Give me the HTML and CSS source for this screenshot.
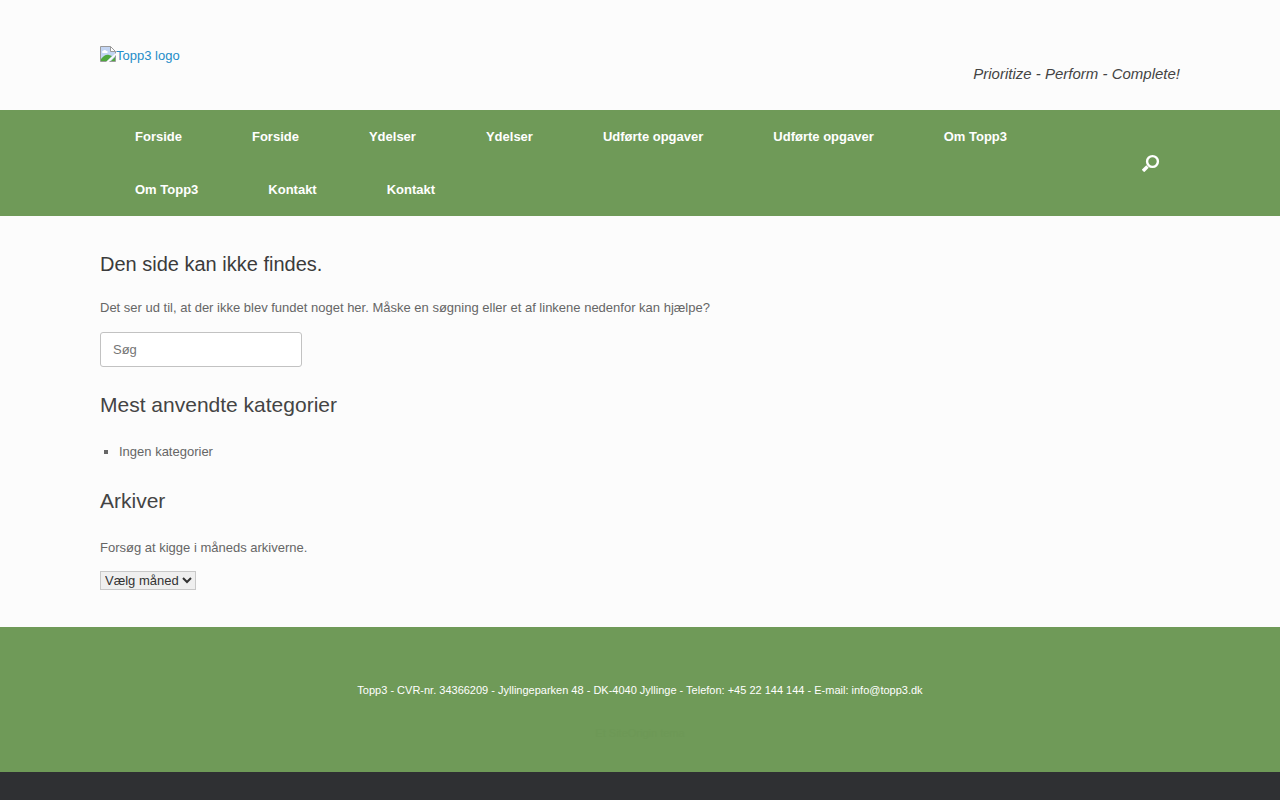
FILE: index.html
```html
<!DOCTYPE html>
<html lang="da">
<head>
    <meta charset="UTF-8">
    <meta name="viewport" content="width=device-width, initial-scale=1.0">
    <title>Siden blev ikke fundet - Topp3</title>
    <link rel="stylesheet" href="styles.css">
</head>
<body>
    <header class="masthead">
        <div class="container masthead-inner">
            <a class="logo" href="#">
                <svg class="logo-icon" width="16" height="16" viewBox="0 0 16 16" aria-hidden="true">
                    <path d="M.5 .5h10l5 5v10H.5z" fill="#c3d5f3" stroke="#9a9a9a"/>
                    <path d="M3 7a1 1 0 0 1 0-2a2 2 0 0 1 3.500 0a1 1 0 0 1 .500 2z" fill="#fff"/>
                    <path d="M1 15v-2c2-2.500 5-5 8-4l3 1-5 5z" fill="#4fa83d"/>
                    <path d="M10.500 .5v5h5z" fill="#fff" stroke="#9a9a9a"/>
                    <path d="M16 7v2l-7 7H6z" fill="#fcfcfc"/>
                    <path d="M15 11v4h-4z" fill="#4fa83d"/>
                </svg><span>Topp3 logo</span>
            </a>
            <p class="tagline">Prioritize - Perform - Complete!</p>
        </div>
    </header>

    <nav class="main-nav">
        <div class="container nav-inner">
            <ul class="menu">
                <li><a href="#">Forside</a></li>
                <li><a href="#">Forside</a></li>
                <li><a href="#">Ydelser</a></li>
                <li><a href="#">Ydelser</a></li>
                <li><a href="#">Udførte opgaver</a></li>
                <li><a href="#">Udførte opgaver</a></li>
                <li><a href="#">Om Topp3</a></li>
                <li><a href="#">Om Topp3</a></li>
                <li><a href="#">Kontakt</a></li>
                <li><a href="#">Kontakt</a></li>
            </ul>
            <button class="search-button" type="button" aria-label="Søg">
                <svg width="18" height="18" viewBox="0 0 18 18" aria-hidden="true">
                    <circle cx="10.500" cy="7.500" r="5.400" fill="none" stroke="#fff" stroke-width="2.400"/>
                    <path d="M5.500 12.500L1 17" stroke="#fff" stroke-width="3.400"/>
                </svg>
            </button>
        </div>
    </nav>

    <main class="main">
        <div class="container content">
            <h1>Den side kan ikke findes.</h1>
            <p>Det ser ud til, at der ikke blev fundet noget her. Måske en søgning eller et af linkene nedenfor kan hjælpe?</p>
            <form class="search-form">
                <input type="search" placeholder="Søg" aria-label="Søg">
            </form>

            <h2>Mest anvendte kategorier</h2>
            <ul class="categories">
                <li>Ingen kategorier</li>
            </ul>

            <h2>Arkiver</h2>
            <p>Forsøg at kigge i måneds arkiverne.</p>
            <select class="archive" aria-label="Arkiver">
                <option>Vælg måned</option>
            </select>
        </div>
    </main>

    <footer class="footer">
        <p>Topp3 - CVR-nr. 34366209 - Jyllingeparken 48 - DK-4040 Jyllinge - Telefon: +45 22 144 144 - E-mail: info@topp3.dk</p>
        <p class="theme-credit">Et <a href="#">SiteOrigin</a> tema</p>
    </footer>
</body>
</html>
```
FILE: styles.css
```css
* {
    margin: 0;
    padding: 0;
    box-sizing: border-box;
}

body {
    background-color: #2f3033;
    color: #666;
    font-family: "Liberation Sans", Arial, sans-serif;
    font-size: 13px;
    line-height: 20px;
}

.container {
    width: 100%;
    max-width: 1080px;
    margin: 0 auto;
}

/* Header */
.masthead {
    background-color: #fcfcfc;
    padding: 46px 0 26px;
}

.masthead-inner {
    display: flex;
    justify-content: space-between;
    align-items: flex-start;
}

.logo {
    display: flex;
    align-items: flex-start;
    color: #248cc8;
    text-decoration: none;
}

.tagline {
    padding-top: 18px;
    color: #444;
    font-size: 15px;
    font-style: italic;
}

/* Navigation */
.main-nav {
    background-color: #6f9a58;
}

.nav-inner {
    display: flex;
    align-items: center;
}

.menu {
    display: flex;
    flex: 1;
    flex-wrap: wrap;
    list-style: none;
}

.menu a {
    display: block;
    padding: 0 35px;
    color: #fff;
    font-weight: bold;
    line-height: 53px;
    text-decoration: none;
}

.search-button {
    display: flex;
    padding: 20px;
    border: none;
    background: none;
    cursor: pointer;
}

/* Content */
.main {
    background-color: #fcfcfc;
}

.content {
    padding: 35px 0 37px;
}

.content h1,
.content h2 {
    color: #3b3b3b;
    font-size: 20px;
    font-weight: normal;
    line-height: 26px;
}

.content h1 {
    margin-bottom: 21px;
}

.content h2 {
    margin: 26px 0 24px;
    color: #444;
    font-size: 21px;
}

.search-form {
    margin-top: 14px;
}

.search-form input {
    display: block;
    width: 202px;
    height: 35px;
    padding: 0 12px;
    border: 1px solid #c2c2c2;
    border-radius: 3px;
    background-color: #fff;
    font: inherit;
}

.search-form + h2 {
    margin-top: 25px;
}

.categories {
    padding-left: 19px;
    list-style: square;
}

.archive {
    display: block;
    margin-top: 13px;
    border: 1px solid #c8c8c8;
    background-color: #efefef;
    color: #333;
    font: inherit;
    line-height: normal;
}

/* Footer */
.footer {
    padding: 53px 20px 29px;
    background-color: #6f9a58;
    color: #fff;
    font-size: 11px;
    text-align: center;
}

.theme-credit {
    margin-top: 23px;
    color: #6d9856;
}

.theme-credit a {
    color: inherit;
    text-decoration: none;
}
```
